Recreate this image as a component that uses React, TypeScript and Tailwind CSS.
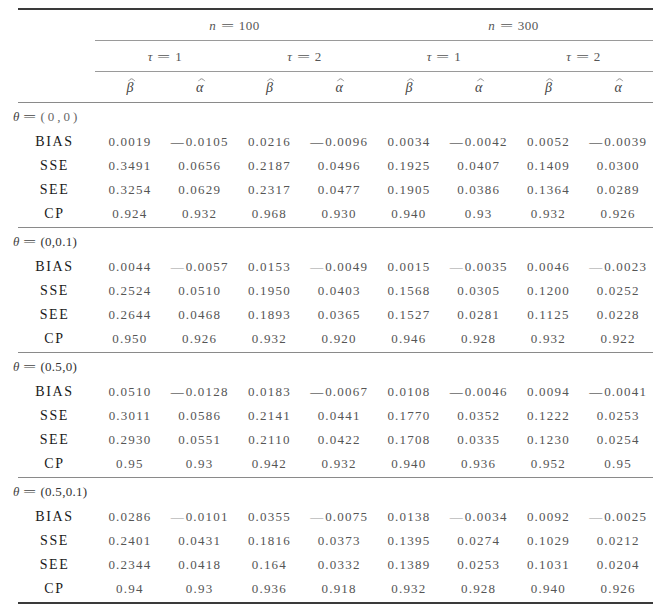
import React from "react";

type Sec = { theta: string; dark: boolean; spaced?: boolean; rows: [string, string[]][] };

const sections: Sec[] = [
  {
    theta: "(0,0)",
    dark: true,
    spaced: true,
    rows: [
      ["BIAS", ["0.0019", "-0.0105", "0.0216", "-0.0096", "0.0034", "-0.0042", "0.0052", "-0.0039"]],
      ["SSE", ["0.3491", "0.0656", "0.2187", "0.0496", "0.1925", "0.0407", "0.1409", "0.0300"]],
      ["SEE", ["0.3254", "0.0629", "0.2317", "0.0477", "0.1905", "0.0386", "0.1364", "0.0289"]],
      ["CP", ["0.924", "0.932", "0.968", "0.930", "0.940", "0.93", "0.932", "0.926"]],
    ],
  },
  {
    theta: "(0,0.1)",
    dark: false,
    rows: [
      ["BIAS", ["0.0044", "-0.0057", "0.0153", "-0.0049", "0.0015", "-0.0035", "0.0046", "-0.0023"]],
      ["SSE", ["0.2524", "0.0510", "0.1950", "0.0403", "0.1568", "0.0305", "0.1200", "0.0252"]],
      ["SEE", ["0.2644", "0.0468", "0.1893", "0.0365", "0.1527", "0.0281", "0.1125", "0.0228"]],
      ["CP", ["0.950", "0.926", "0.932", "0.920", "0.946", "0.928", "0.932", "0.922"]],
    ],
  },
  {
    theta: "(0.5,0)",
    dark: true,
    rows: [
      ["BIAS", ["0.0510", "-0.0128", "0.0183", "-0.0067", "0.0108", "-0.0046", "0.0094", "-0.0041"]],
      ["SSE", ["0.3011", "0.0586", "0.2141", "0.0441", "0.1770", "0.0352", "0.1222", "0.0253"]],
      ["SEE", ["0.2930", "0.0551", "0.2110", "0.0422", "0.1708", "0.0335", "0.1230", "0.0254"]],
      ["CP", ["0.95", "0.93", "0.942", "0.932", "0.940", "0.936", "0.952", "0.95"]],
    ],
  },
  {
    theta: "(0.5,0.1)",
    dark: false,
    rows: [
      ["BIAS", ["0.0286", "-0.0101", "0.0355", "-0.0075", "0.0138", "-0.0034", "0.0092", "-0.0025"]],
      ["SSE", ["0.2401", "0.0431", "0.1816", "0.0373", "0.1395", "0.0274", "0.1029", "0.0212"]],
      ["SEE", ["0.2344", "0.0418", "0.164", "0.0332", "0.1389", "0.0253", "0.1031", "0.0204"]],
      ["CP", ["0.94", "0.93", "0.936", "0.918", "0.932", "0.928", "0.940", "0.926"]],
    ],
  },
];

function Eq({ tight }: { tight?: boolean }) {
  return (
    <span
      className={`inline-block w-[13px] text-center scale-x-[1.8] ${tight ? "mx-[4px]" : "mx-[5px]"}`}
    >
      =
    </span>
  );
}

function Hat({ letter }: { letter: string }) {
  return (
    <span className="relative inline-block italic text-[14px] text-[#444]">
      {letter}
      <svg
        className="absolute left-1/2 -translate-x-[30%] -top-[4px]"
        width="8"
        height="5"
        viewBox="0 0 8 5"
      >
        <path d="M0.8 4.2 Q4 -0.6 7.2 4.2" stroke="#777" strokeWidth="0.8" fill="none" />
      </svg>
    </span>
  );
}

function Num({ v, dark }: { v: string; dark: boolean }) {
  const neg = v.startsWith("-");
  const body = neg ? v.slice(1) : v;
  return (
    <span className="inline-flex items-center">
      {neg && (
        <span className={`mr-[2px] tracking-normal ${dark ? "text-[#222]" : "text-[#999]"}`}>—</span>
      )}
      <span className="tracking-[1.2px] text-[#555]">{body}</span>
    </span>
  );
}

export default function App() {
  return (
    <div className="w-[668px] h-[611px] bg-white text-[13px] leading-none font-['Liberation_Serif','Times_New_Roman',serif]">
      <div className="ml-[18px] w-[635px] pt-[8px]">
        <div className="h-[2px] bg-[#3a3a3a]" />
        <div className="grid grid-cols-[77px_1fr_1fr] h-[30px] items-center text-[#555]">
          <div />
          <div className="text-center">
            <span className="italic">n</span>
            <Eq />
            <span className="tracking-[0.5px]">100</span>
          </div>
          <div className="text-center">
            <span className="italic">n</span>
            <Eq />
            <span className="tracking-[0.5px]">300</span>
          </div>
        </div>
        <div className="ml-[77px] h-px bg-[#9a9a9a]" />
        <div className="grid grid-cols-[77px_1fr_1fr_1fr_1fr] h-[30px] items-center text-[#555]">
          <div />
          {["1", "2", "1", "2"].map((t, i) => (
            <div key={i} className="text-center">
              <span className="italic">τ</span>
              <Eq />
              <span>{t}</span>
            </div>
          ))}
        </div>
        <div className="ml-[77px] h-px bg-[#9a9a9a]" />
        <div className="grid grid-cols-[77px_repeat(8,1fr)] h-[30px] items-center pt-[2px]">
          <div />
          {[0, 1, 2, 3, 4, 5, 6, 7].map((i) => (
            <div key={i} className="text-center">
              <Hat letter={i % 2 === 0 ? "β" : "α"} />
            </div>
          ))}
        </div>
        {sections.map((s, si) => (
          <div key={si}>
            <div className="h-px bg-[#8a8a8a]" />
            <div className="h-[26px] flex items-center -ml-[5px] text-[#444]">
              <span className="italic">θ</span>
              <Eq tight />
              <span className={s.spaced ? "tracking-[3px] text-[#666]" : "tracking-[0.3px] text-[#333]"}>
                {s.theta}
              </span>
            </div>
            {s.rows.map(([label, vals]) => (
              <div key={label} className="grid grid-cols-[77px_repeat(8,1fr)] h-[24px] items-center">
                <div className="text-center pr-[4px] pt-[2px] text-[14px] tracking-[1.6px] text-[#1a1a1a]">
                  {label}
                </div>
                {vals.map((v, vi) => (
                  <div key={vi} className="text-center">
                    <Num v={v} dark={s.dark} />
                  </div>
                ))}
              </div>
            ))}
            <div className="h-[2px]" />
          </div>
        ))}
        <div className="h-[2px] bg-[#3a3a3a]" />
      </div>
    </div>
  );
}
